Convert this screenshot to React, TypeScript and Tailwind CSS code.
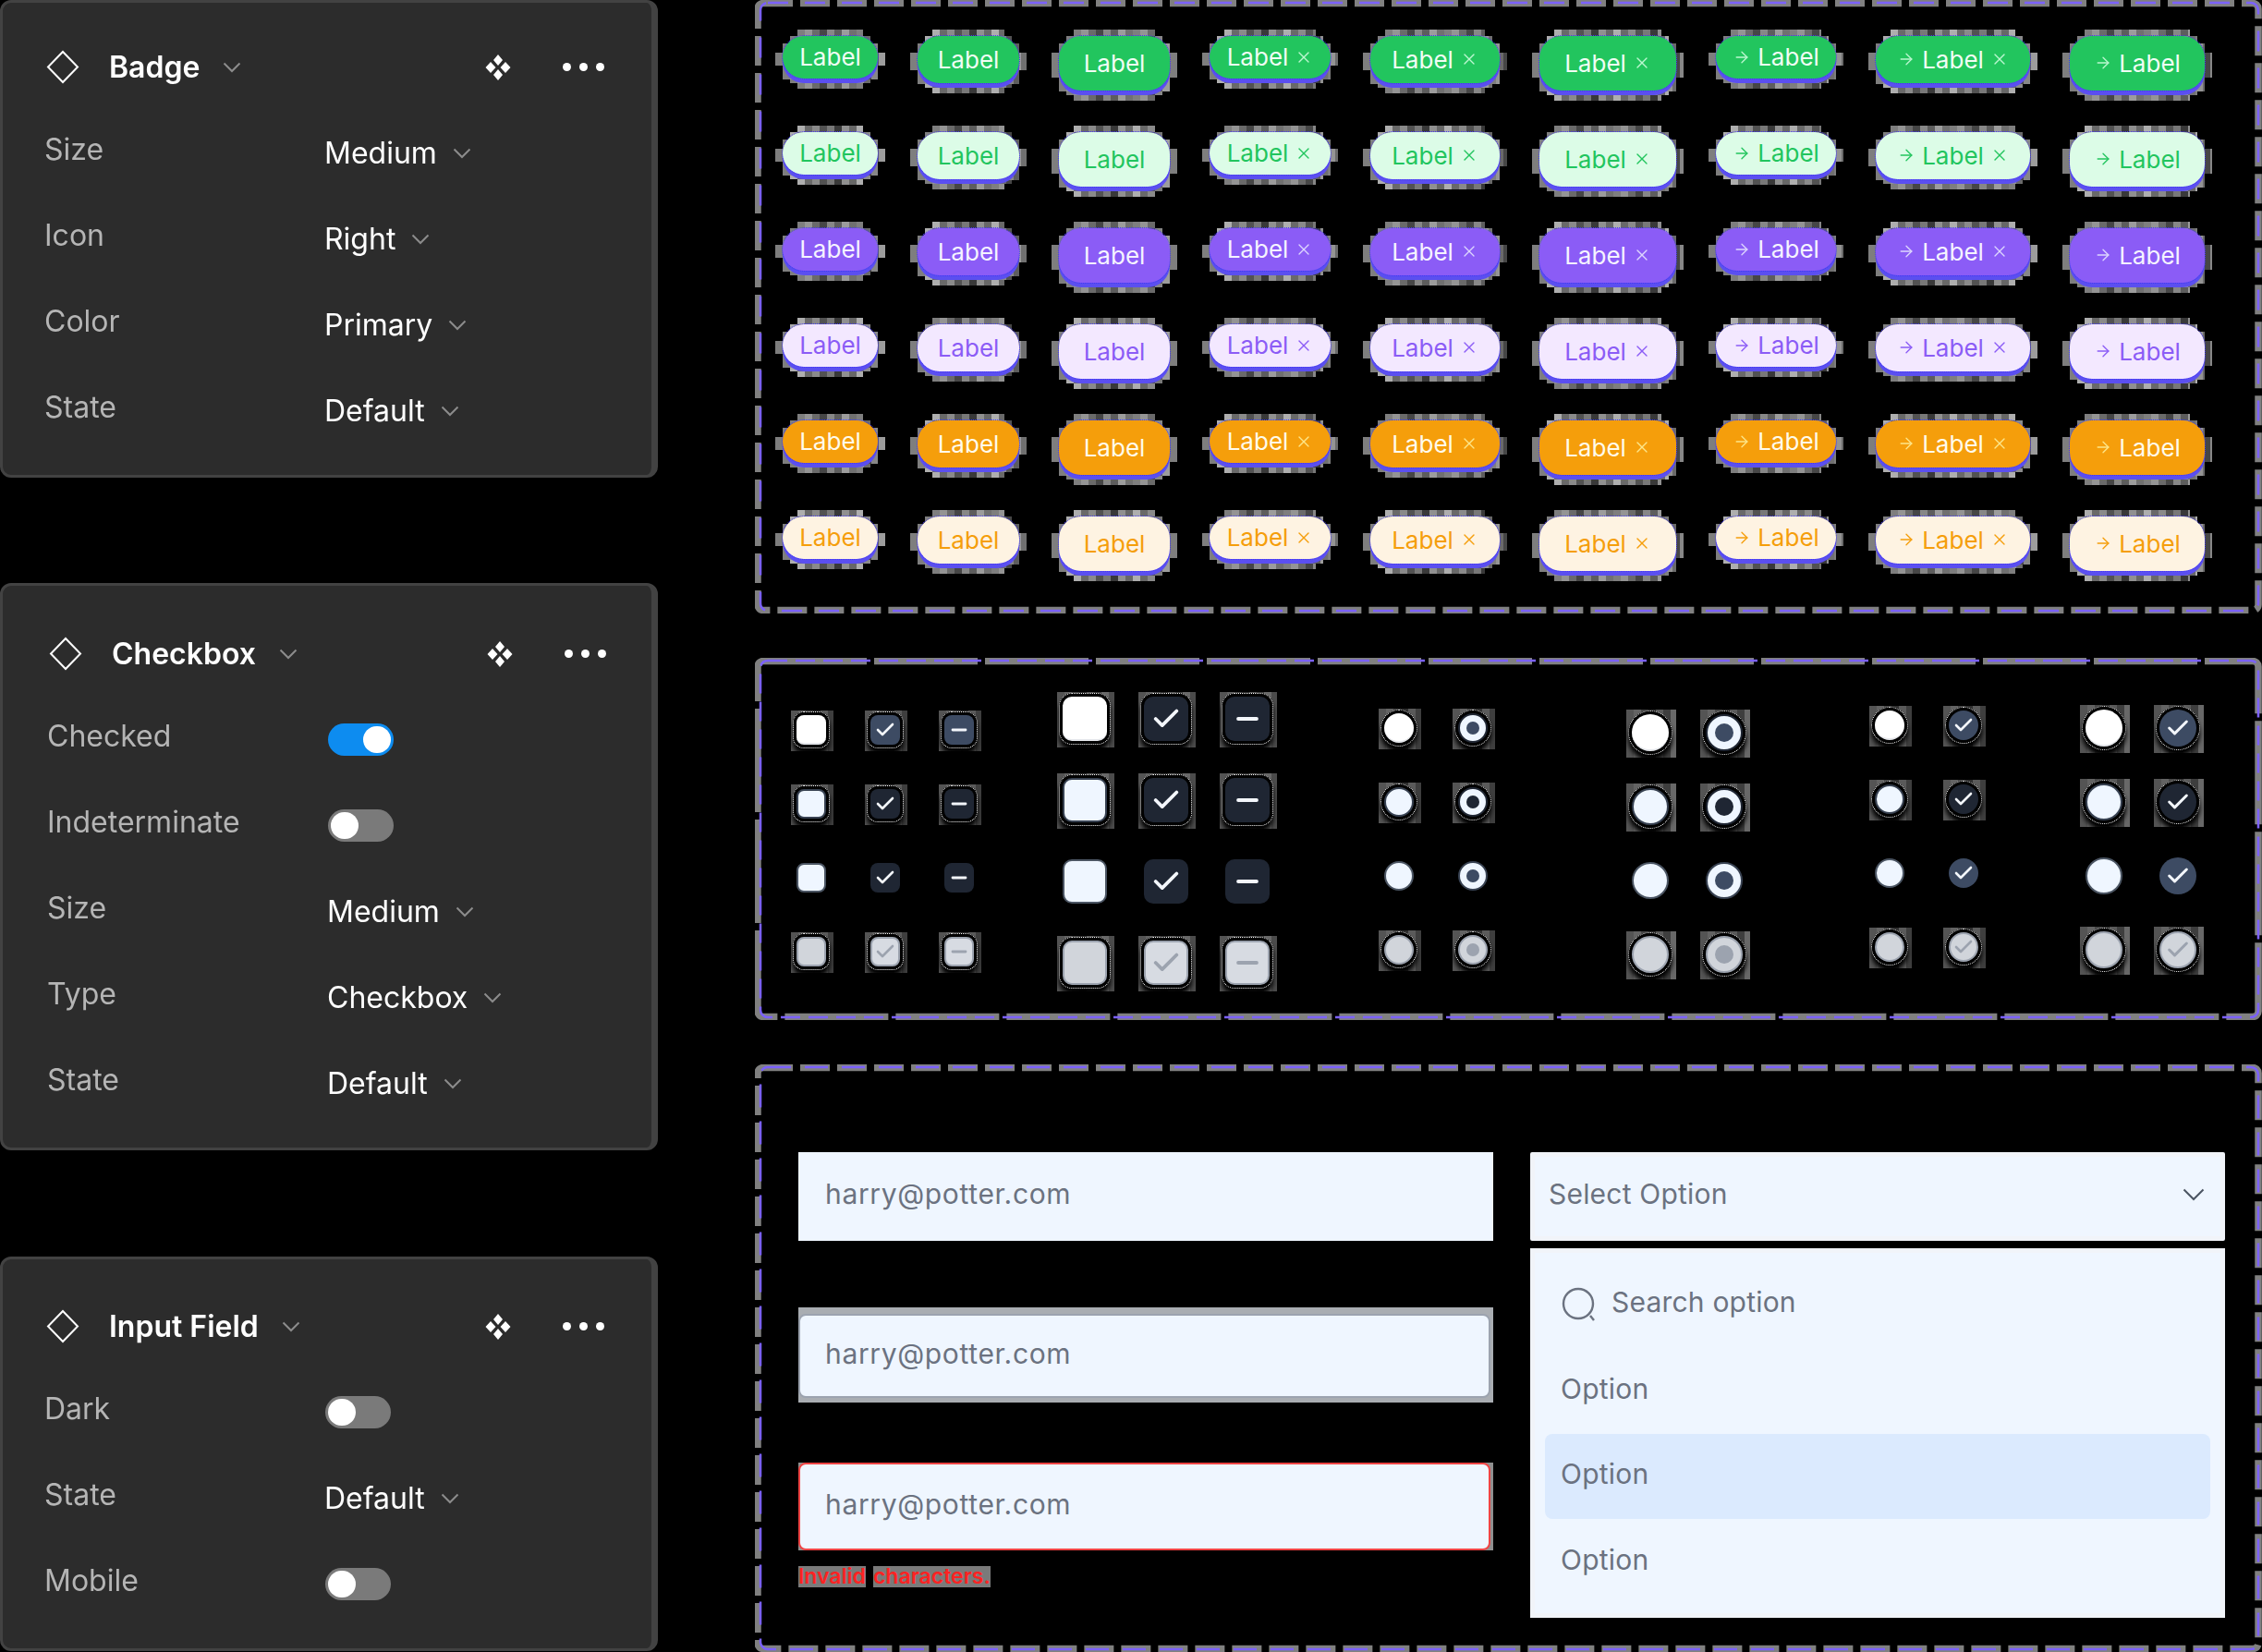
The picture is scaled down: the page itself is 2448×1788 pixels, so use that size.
import type { ReactNode } from 'react';
import { ArrowRight, Check, Minus, X } from 'lucide-react';

const FONT = "font-['Inter','Liberation_Sans',sans-serif]";

const HALO_A =
  'bg-[repeating-linear-gradient(90deg,#a8a8a8_0_8px,#c6c6c6_8px_16px,#8e8e8e_16px_24px,#5e5e5e_24px_32px,#b4b4b4_32px_40px,#7c7c7c_40px_48px,#d0d0d0_48px_56px,#969696_56px_64px)]';
const HALO_B =
  'bg-[repeating-linear-gradient(90deg,#e8e8e8_0_8px,#8c8c8c_8px_16px,#b8b8b8_16px_24px,#6e6e6e_24px_32px,#a0a0a0_32px_40px,#4c4c4c_40px_48px,#c0c0c0_48px_56px,#8a8a8a_56px_64px)]';

const BADGE_COLS = [
  { w: 'w-[103px]', h: 'h-[46px]', arrow: false, close: false },
  { w: 'w-[110px]', h: 'h-[51px]', arrow: false, close: false },
  { w: 'w-[120px]', h: 'h-[59px]', arrow: false, close: false },
  { w: 'w-[131px]', h: 'h-[46px]', arrow: false, close: true },
  { w: 'w-[140px]', h: 'h-[51px]', arrow: false, close: true },
  { w: 'w-[148px]', h: 'h-[59px]', arrow: false, close: true },
  { w: 'w-[130px]', h: 'h-[46px]', arrow: true, close: false },
  { w: 'w-[167px]', h: 'h-[51px]', arrow: true, close: true },
  { w: 'w-[146px]', h: 'h-[59px]', arrow: true, close: false },
];

const BADGE_ROWS = [
  { body: 'bg-[#22c55e] text-[#f0fdf4]', icon: 'text-[#bbf7d0]' },
  { body: 'bg-[#dcfce7] text-[#22c55e]', icon: 'text-[#22c55e]' },
  { body: 'bg-[#8b5cf6] text-[#f5f3ff]', icon: 'text-[#ddd6fe]' },
  { body: 'bg-[#f3e8ff] text-[#8b5cf6]', icon: 'text-[#8b5cf6]' },
  { body: 'bg-[#f59e0b] text-[#fffbeb]', icon: 'text-[#fde68a]' },
  { body: 'bg-[#fef3e2] text-[#f59e0b]', icon: 'text-[#f59e0b]' },
];

function DashedFrame({ h, gray, purple, className, children }: { h: number; gray: string; purple: string; className: string; children: ReactNode }) {
  return (
    <section className={`relative w-[1631px] ${className}`}>
      <svg className="absolute left-0 top-0" width={1631} height={h} fill="none">
        <rect x={3} y={3.5} width={1624} height={h - 7} rx={6} stroke="#808080" strokeWidth={7.5} strokeDasharray={gray} />
        <rect x={6} y={3} width={1621} height={h - 6} rx={8} stroke="#7b61ff" strokeWidth={2.5} strokeDasharray={purple} />
      </svg>
      {children}
    </section>
  );
}

function Chevron({ className, wide }: { className: string; wide?: boolean }) {
  return wide ? (
    <svg className={className} width="24" height="14" viewBox="0 0 24 14" fill="none" stroke="currentColor" strokeWidth="2">
      <path d="M1.5 1.5 L12 12 L22.5 1.5" />
    </svg>
  ) : (
    <svg className={className} width="20" height="12" viewBox="0 0 20 12" fill="none" stroke="currentColor" strokeWidth="2">
      <path d="M1.5 1.5 L10 10 L18.5 1.5" />
    </svg>
  );
}

function Badge({ col, row, seed }: { col: (typeof BADGE_COLS)[number]; row: (typeof BADGE_ROWS)[number]; seed: number }) {
  const halo = seed % 2 === 0 ? HALO_A : HALO_B;
  return (
    <div className={`relative ${col.w} ${col.h} shrink-0`}>
      <div className="absolute inset-0 opacity-75">
        <span className={`absolute left-4 right-4 -top-[7px] -bottom-[11px] ${halo}`} />
        <span className={`absolute -left-2 -right-2 top-[18px] bottom-[14px] ${HALO_A}`} />
        <span className={`absolute inset-x-2 top-0 -bottom-[5px] ${halo}`} />
        <span className={`absolute inset-x-0 top-2 -bottom-px ${HALO_A}`} />
      </div>
      <div
        className={`relative flex h-full w-full items-center justify-center rounded-[24px] pb-px text-[26px] font-normal shadow-[0_5px_0_#5b4ff0] outline-1 outline-dotted outline-[#4338f5] ${row.body}`}
      >
        {col.arrow && <ArrowRight className={`mr-[7px] ${row.icon}`} size={20} strokeWidth={1.6} />}
        <span>Label</span>
        {col.close && <X className={`ml-[7px] ${row.icon}`} size={20} strokeWidth={1.6} />}
      </div>
    </div>
  );
}

const BOX_FILL = ['bg-white border-b-2 border-[#e5e7eb]', 'bg-[#eff6ff] border-2 border-[#374151]', 'bg-[#eff6ff] border-2 border-[#4b5563]', 'bg-[#d1d5db] border-2 border-[#9ca3af]'];
const MARK_FILL = ['bg-[#3d4b63]', 'bg-[#1f2633]', 'bg-[#1f2633]', 'bg-[#d7dbe2] border-2 border-[#9ca3af]'];
const MARK_FILL_LARGE = ['bg-[#1f2633]', 'bg-[#1f2633]', 'bg-[#1f2633]', 'bg-[#d7dbe2] border-2 border-[#9ca3af]'];
const CHECK_RADIO_FILL = ['bg-[#3d4b63]', 'bg-[#1f2633]', 'bg-[#3d4b63]', 'bg-[#d1d5db] border-2 border-[#9ca3af]'];
const DOT_RING = ['bg-[#eff6ff] border-2 border-[#1f2633]', 'bg-[#eff6ff] border-2 border-[#1f2633]', 'bg-[#eff6ff] border-2 border-[#374151]', 'bg-[#d1d5db] border-2 border-[#9ca3af]'];
const DOT_FILL = ['bg-[#3d4b63]', 'bg-[#1f2633]', 'bg-[#3d4b63]', 'bg-[#9ca3af]'];

function Cell({ shape, kind, large, row }: { shape: 'box' | 'radio' | 'radioCheck'; kind: 'empty' | 'mark' | 'minus' | 'dot'; large: boolean; row: number }) {
  const size = large ? (shape === 'box' ? 'h-12 w-12' : 'h-10 w-10') : 'h-8 w-8';
  const round = shape === 'box' ? (large ? 'rounded-[10px]' : 'rounded-lg') : 'rounded-full';
  let fill = BOX_FILL[row];
  if (kind === 'dot') fill = DOT_RING[row];
  else if (kind !== 'empty') {
    if (shape === 'radioCheck') fill = CHECK_RADIO_FILL[row];
    else fill = large ? MARK_FILL_LARGE[row] : MARK_FILL[row];
  }
  const markColor = row === 3 ? 'text-[#9ca3af]' : 'text-[#f3f6fb]';
  const iconSize = large ? (shape === 'box' ? 34 : 28) : 24;
  const hasHalo = row !== 2;
  return (
    <div className={`relative ${size}`}>
      {hasHalo && <span className={`absolute -left-[6px] -right-[8px] -top-[5px] -bottom-[7px] ${HALO_A} opacity-50`} />}
      <div
        className={`relative flex h-full w-full items-center justify-center ${round} ${fill} ${
          hasHalo ? 'shadow-[0_0_0_4px_#000,0_6px_5px_4px_#000] outline-1 outline-dotted outline-offset-[3px] outline-white' : ''
        }`}
      >
        {kind === 'mark' && <Check className={markColor} size={iconSize} strokeWidth={2.6} />}
        {kind === 'minus' && <Minus className={markColor} size={iconSize} strokeWidth={2.8} />}
        {kind === 'dot' && <span className={`${large ? 'h-5 w-5' : 'h-3.5 w-3.5'} rounded-full ${DOT_FILL[row]}`} />}
      </div>
    </div>
  );
}

function CheckGroup({ className, large, shape, kinds }: { className: string; large: boolean; shape: 'box' | 'radio' | 'radioCheck'; kinds: ('empty' | 'mark' | 'minus' | 'dot')[] }) {
  return (
    <div className={`grid shrink-0 ${className}`}>
      {[0, 1, 2, 3].map((row) => kinds.map((kind) => <Cell key={`${row}${kind}`} shape={shape} kind={kind} large={large} row={row} />))}
    </div>
  );
}

function Fld({ children, className }: { children: ReactNode; className: string }) {
  return <div className={`flex items-center pb-[5px] text-[30px] tracking-[0.2px] text-[#6b7280] ${className}`}>{children}</div>;
}

function Email() {
  return <span className="tracking-[0.65px]">harry@potter.com</span>;
}

function Toggle({ on }: { on?: boolean }) {
  return (
    <div className={`ml-px flex h-[35px] w-[71px] items-center rounded-full px-[3px] ${on ? 'justify-end bg-[#0d8cf0]' : 'justify-start bg-[#7a7a7a]'}`}>
      <span className="h-[29px] w-[30px] rounded-full bg-white" />
    </div>
  );
}

function Row({ label, children }: { label: string; children: ReactNode }) {
  return (
    <div className="flex h-[93px] items-center">
      <span className="mb-[8px] w-[303px] text-[32px] text-[#b5b5b5]">{label}</span>
      {children}
    </div>
  );
}

function Value({ text }: { text: string }) {
  return (
    <span className="flex items-center gap-[17px] text-[32px] text-white">
      {text}
      <Chevron className="text-[#8c8c8c]" />
    </span>
  );
}

function Panel({ title, className, children }: { title: string; className: string; children: ReactNode }) {
  return (
    <aside className={`w-[712px] shrink-0 rounded-xl border-x-[3px] border-y-[3px] border-r-[7px] border-[#424242] bg-[#2c2c2c] blur-[0.5px] ${className}`}>
      <header className="flex h-[93px] items-center">
        <svg className="ml-[2px] mr-[32px]" width="36" height="37" viewBox="0 0 36 37" fill="none">
          <path d="M18 2 L34 18.5 L18 35 L2 18.5 Z" stroke="#fff" strokeWidth="2" />
        </svg>
        <span className="text-[32px] font-semibold text-white">{title}</span>
        <Chevron className="ml-[25px] text-[#8c8c8c]" />
        <svg className="ml-auto mr-[55px]" width="30" height="30" viewBox="0 0 30 30" fill="#fff">
          <path d="M15 1 L20 7 L15 13 L10 7 Z M15 17 L20 23 L15 29 L10 23 Z M7 9 L12.5 15 L7 21 L1.5 15 Z M23 9 L28.5 15 L23 21 L17.5 15 Z" />
        </svg>
        <span className="flex gap-[9px]">
          <i className="h-[9px] w-[9px] rounded-full bg-white" />
          <i className="h-[9px] w-[9px] rounded-full bg-white" />
          <i className="h-[9px] w-[9px] rounded-full bg-white" />
        </span>
      </header>
      {children}
    </aside>
  );
}

export default function App() {
  return (
    <div className={`flex h-[1788px] w-[2448px] overflow-hidden bg-black ${FONT}`}>
      <div className="flex w-[712px] shrink-0 flex-col">
        <Panel title="Badge" className="pb-[23px] pl-[45px] pr-[51px] pt-[23px]">
          <Row label="Size"><Value text="Medium" /></Row>
          <Row label="Icon"><Value text="Right" /></Row>
          <Row label="Color"><Value text="Primary" /></Row>
          <Row label="State"><Value text="Default" /></Row>
        </Panel>
        <Panel title="Checkbox" className="mt-[114px] pb-[23px] pl-[48px] pr-[49px] pt-[27px]">
          <Row label="Checked"><Toggle on /></Row>
          <Row label="Indeterminate"><Toggle /></Row>
          <Row label="Size"><Value text="Medium" /></Row>
          <Row label="Type"><Value text="Checkbox" /></Row>
          <Row label="State"><Value text="Default" /></Row>
        </Panel>
        <Panel title="Input Field" className="mt-[115px] pb-[23px] pl-[45px] pr-[51px] pt-[26px]">
          <Row label="Dark"><Toggle /></Row>
          <Row label="State"><Value text="Default" /></Row>
          <Row label="Mobile"><Toggle /></Row>
        </Panel>
      </div>

      <main className="ml-[105px] flex w-[1631px] shrink-0 flex-col">
        <DashedFrame h={664} gray="32 8" purple="22 18" className="h-[664px]">
          <div className="relative flex flex-col pl-[30px] pt-[39px]">
            {BADGE_ROWS.map((row, r) => (
              <div key={r} className="flex h-[104px] items-start gap-[43px]">
                {BADGE_COLS.map((col, c) => (
                  <Badge key={c} col={col} row={row} seed={r + c} />
                ))}
              </div>
            ))}
          </div>
        </DashedFrame>

        <DashedFrame h={392} gray="112 8" purple="21 9" className="mt-12 h-[392px]">
          <div className="relative flex items-start pl-[45px]">
            <CheckGroup className="mt-[62px] grid-cols-[repeat(3,32px)] gap-12" large={false} shape="box" kinds={['empty', 'mark', 'minus']} />
            <CheckGroup className="ml-[96px] mt-[42px] grid-cols-[repeat(3,48px)] gap-10" large shape="box" kinds={['empty', 'mark', 'minus']} />
            <CheckGroup className="ml-[124px] mt-[60px] grid-cols-[repeat(2,32px)] gap-12" large={false} shape="radio" kinds={['empty', 'dot']} />
            <CheckGroup className="ml-[156px] mt-[61px] grid-cols-[repeat(2,40px)] gap-10" large shape="radio" kinds={['empty', 'dot']} />
            <CheckGroup className="ml-[143px] mt-[57px] grid-cols-[repeat(2,32px)] gap-12" large={false} shape="radioCheck" kinds={['empty', 'mark']} />
            <CheckGroup className="ml-[116px] mt-[56px] grid-cols-[repeat(2,40px)] gap-10" large shape="radioCheck" kinds={['empty', 'mark']} />
          </div>
        </DashedFrame>

        <DashedFrame h={636} gray="32 8" purple="25 15" className="mt-12 h-[636px]">
          <div className="relative flex gap-10 pl-[47px] pt-[95px]">
            <div className="flex w-[752px] flex-col">
              <Fld className="h-24 bg-[#eff6ff] pl-[29px]"><Email /></Fld>
              <div className="mt-[72px] h-[103px] bg-[#a9adb2] pb-[5px] pr-[3px] pt-[7px]">
                <Fld className="h-full rounded-lg border-2 border-[#9ca3af] bg-[#eff6ff] pl-[27px]"><Email /></Fld>
              </div>
              <div className="mt-[65px] h-[95px] bg-[#8f8f8f] pr-[3px]">
                <Fld className="h-full rounded-lg border-2 border-[#ef4444] bg-[#eff6ff] pl-[27px]"><Email /></Fld>
              </div>
              <p className="mt-[17px] flex h-[23px] gap-2 text-[23px] font-semibold leading-[23px] text-[#ff2222]">
                <span className="bg-[#7a7a7a]">Invalid</span>
                <span className="bg-[#7a7a7a]">characters.</span>
              </p>
            </div>
            <div className="flex w-[752px] flex-col">
              <Fld className="h-24 justify-between rounded-[2px] border-[5px] border-[#f1f4f9] bg-[#eff6ff] pl-[15px] pr-[17px]">
                Select Option
                <Chevron className="text-[#4b5563]" wide />
              </Fld>
              <div className="mt-2 h-[400px] border-[5px] border-[#f1f4f9] bg-[#eff6ff] px-[11px] pt-[9px]">
                <div className="flex h-[94px] items-center pb-[5px] pl-[18px] text-[30px] tracking-[0.2px] text-[#6b7280]">
                  <svg className="mr-[16px] mt-[5px]" width="38" height="38" viewBox="0 0 38 38" fill="none" stroke="#6b7280" strokeWidth="2.4">
                    <circle cx="18" cy="18" r="16" />
                    <path d="M31 31 L35 36" />
                  </svg>
                  Search option
                </div>
                <Fld className="h-[93px] pl-[17px]">Option</Fld>
                <Fld className="h-[92px] rounded-lg bg-[#dbeafe] pl-[17px]">Option</Fld>
                <Fld className="h-[93px] pl-[17px]">Option</Fld>
              </div>
            </div>
          </div>
        </DashedFrame>
      </main>
    </div>
  );
}
